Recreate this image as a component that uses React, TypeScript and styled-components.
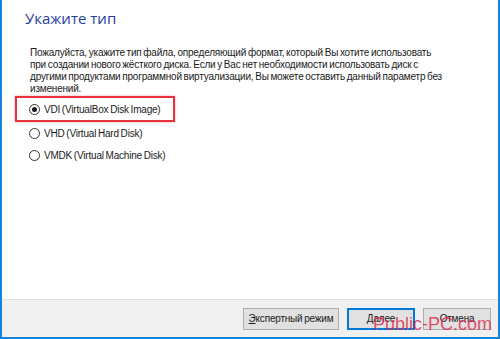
import React, { useState } from "react";
import styled, { createGlobalStyle } from "styled-components";

const GlobalStyle = createGlobalStyle`
  html, body {
    margin: 0;
    padding: 0;
    background: #ffffff;
  }
`;

const Window = styled.div`
  position: relative;
  box-sizing: border-box;
  width: 500px;
  height: 339px;
  display: flex;
  flex-direction: column;
  background: #ffffff;
  border-left: 2px solid #1883d7;
  border-right: 2px solid #1883d7;
  border-bottom: 2px solid #1883d7;
  font-family: "Liberation Sans", Arial, sans-serif;
  font-size: 10px;
  letter-spacing: -0.2px;
  word-spacing: -0.8px;
  color: #1a1a1a;
  overflow: hidden;
`;

const Body = styled.div`
  flex: 1;
  display: flex;
  flex-direction: column;
  padding: 8px 0 0 23px;
`;

const Title = styled.h1`
  margin: 0;
  font-family: "Open Sans", "Noto Sans", sans-serif;
  font-weight: 400;
  font-size: 15px;
  letter-spacing: 0;
  word-spacing: 0;
  line-height: 20px;
  color: #1e3f9e;
`;

const Description = styled.p`
  margin: 19px 0 0 5px;
  line-height: 12px;
  white-space: nowrap;
`;

const Options = styled.div`
  display: flex;
  flex-direction: column;
  margin: 1px 0 0 -10px;
`;

const Option = styled.label<{ highlighted: boolean }>`
  display: flex;
  align-items: center;
  gap: 4px;
  box-sizing: border-box;
  width: 160px;
  height: ${(p) => (p.highlighted ? "26px" : "22px")};
  padding-left: ${(p) => (p.highlighted ? "12px" : "14px")};
  border: ${(p) => (p.highlighted ? "2px solid #e8323c" : "none")};
  box-shadow: ${(p) =>
    p.highlighted ? "0 0 2px rgba(232, 50, 60, 0.5)" : "none"};
  white-space: nowrap;
  cursor: pointer;
`;

const RadioCircle = styled.span<{ checked: boolean }>`
  position: relative;
  flex: none;
  box-sizing: border-box;
  width: 11px;
  height: 11px;
  border-radius: 50%;
  border: 1px solid #333333;
  background: #ffffff;

  &::after {
    content: "";
    display: ${(p) => (p.checked ? "block" : "none")};
    position: absolute;
    left: 2px;
    top: 2px;
    width: 5px;
    height: 5px;
    border-radius: 50%;
    background: #1a1a1a;
  }
`;

const Footer = styled.div`
  height: 37px;
  display: flex;
  align-items: center;
  justify-content: flex-end;
  gap: 8px;
  padding-right: 7px;
  background: #f0f0f0;
  border-top: 1px solid #dfdfdf;
`;

const Button = styled.button<{ primary?: boolean; wide?: boolean }>`
  box-sizing: border-box;
  height: 22px;
  width: ${(p) => (p.wide ? "96px" : "68px")};
  padding: 0 4px;
  font-family: inherit;
  font-size: inherit;
  letter-spacing: inherit;
  word-spacing: inherit;
  color: #1a1a1a;
  background: #e1e1e1;
  border: ${(p) => (p.primary ? "2px solid #0078d7" : "1px solid #adadad")};
  cursor: pointer;
`;

const Watermark = styled.div`
  position: absolute;
  right: 6px;
  bottom: 2px;
  font-family: "Liberation Sans", Arial, sans-serif;
  font-size: 18px;
  letter-spacing: 0;
  word-spacing: 0;
  color: rgba(220, 40, 72, 0.8);
  pointer-events: none;
`;

const formats = [
  { id: "vdi", label: "VDI (VirtualBox Disk Image)" },
  { id: "vhd", label: "VHD (Virtual Hard Disk)" },
  { id: "vmdk", label: "VMDK (Virtual Machine Disk)" },
];

const App: React.FC = () => {
  const [selected, setSelected] = useState("vdi");

  return (
    <>
      <GlobalStyle />
      <Window>
        <Body>
          <Title>Укажите тип</Title>
          <Description>
            Пожалуйста, укажите тип файла, определяющий формат, который Вы
            хотите использовать
            <br />
            при создании нового жёсткого диска. Если у Вас нет необходимости
            использовать диск с
            <br />
            другими продуктами программной виртуализации, Вы можете оставить
            данный параметр без
            <br />
            изменений.
          </Description>
          <Options>
            {formats.map((f) => (
              <Option
                key={f.id}
                highlighted={f.id === "vdi"}
                onClick={() => setSelected(f.id)}
              >
                <RadioCircle checked={selected === f.id} />
                {f.label}
              </Option>
            ))}
          </Options>
        </Body>
        <Footer>
          <Button wide>
            <u>Э</u>кспертный режим
          </Button>
          <Button primary>
            <u>Д</u>алее
          </Button>
          <Button>Отмена</Button>
        </Footer>
        <Watermark>Public-PC.com</Watermark>
      </Window>
    </>
  );
};

export default App;
